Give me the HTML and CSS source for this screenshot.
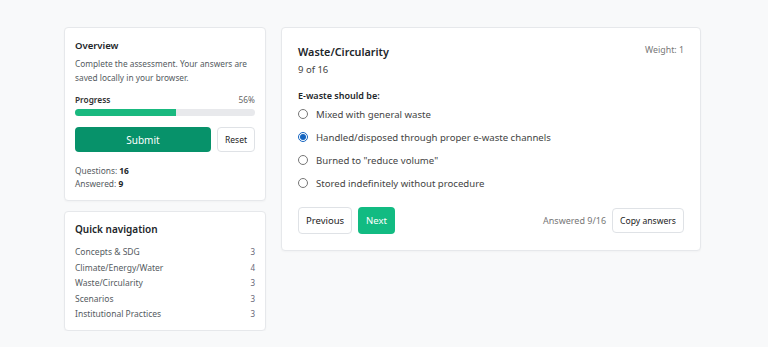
FILE: index.html
```html
<!DOCTYPE html>
<html lang="en">
<head>
    <meta charset="UTF-8">
    <meta name="viewport" content="width=device-width, initial-scale=1.0">
    <title>Assessment</title>
    <link rel="stylesheet" href="styles.css">
</head>
<body>
    <div class="layout">
        <aside class="sidebar">
            <div class="card overview">
                <h3>Overview</h3>
                <p class="muted">Complete the assessment. Your answers are saved locally in your browser.</p>
                <div class="progress-head">
                    <span class="progress-label">Progress</span>
                    <span class="progress-pct">56%</span>
                </div>
                <div class="bar"><div class="bar-fill" style="width: 56%"></div></div>
                <div class="actions">
                    <button class="btn btn-submit">Submit</button>
                    <button class="btn btn-plain btn-reset">Reset</button>
                </div>
                <div class="stats">
                    <div>Questions: <strong>16</strong></div>
                    <div>Answered: <strong>9</strong></div>
                </div>
            </div>

            <div class="card nav">
                <h3 class="nav-title">Quick navigation</h3>
                <ul class="nav-list">
                    <li><span>Concepts &amp; SDG</span><span class="count">3</span></li>
                    <li><span>Climate/Energy/Water</span><span class="count">4</span></li>
                    <li><span>Waste/Circularity</span><span class="count">3</span></li>
                    <li><span>Scenarios</span><span class="count">3</span></li>
                    <li><span>Institutional Practices</span><span class="count">3</span></li>
                </ul>
            </div>
        </aside>

        <main class="card question">
            <div class="q-head">
                <div>
                    <h2>Waste/Circularity</h2>
                    <div class="q-count">9 of 16</div>
                </div>
                <div class="weight">Weight: 1</div>
            </div>

            <div class="q-text">E-waste should be:</div>
            <div class="options">
                <label class="option"><input type="radio" name="q9"> Mixed with general waste</label>
                <label class="option"><input type="radio" name="q9" checked> Handled/disposed through proper e-waste channels</label>
                <label class="option"><input type="radio" name="q9"> Burned to "reduce volume"</label>
                <label class="option"><input type="radio" name="q9"> Stored indefinitely without procedure</label>
            </div>

            <div class="q-foot">
                <div class="q-nav">
                    <button class="btn btn-plain btn-lg">Previous</button>
                    <button class="btn btn-next btn-lg">Next</button>
                </div>
                <div class="q-meta">
                    <span class="answered">Answered 9/16</span>
                    <button class="btn btn-plain btn-copy">Copy answers</button>
                </div>
            </div>
        </main>
    </div>
</body>
</html>
```

FILE: styles.css
```css
body {
    font-family: "Noto Sans", "Open Sans", sans-serif;
    font-size: 10px;
    background: #f8f9fa;
    color: #212529;
    margin: 0;
    padding: 27px 3px 0 0;
}
.layout {
    width: 637px;
    margin: 0 auto;
    display: grid;
    grid-template-columns: 202px 1fr;
    gap: 15px;
    align-items: start;
}
.sidebar {
    display: flex;
    flex-direction: column;
    gap: 10px;
}
.card {
    background: #fff;
    border: 1px solid #e6e8eb;
    border-radius: 4px;
    box-shadow: 0 1px 2px rgba(0,0,0,0.03);
}
h3 {
    margin: 0;
    font-size: 9.5px;
    font-weight: 600;
    line-height: 14px;
}
.overview {
    padding: 11px 10px 10px;
}
.muted {
    color: #555b61;
    font-size: 8.3px;
    margin: 4px 0 0;
    line-height: 14px;
}
.progress-head {
    display: flex;
    justify-content: space-between;
    margin-top: 9px;
    font-size: 8.3px;
    line-height: 12px;
}
.progress-label { font-weight: 600; color: #333; }
.progress-pct { color: #666; }
.bar {
    height: 7px;
    background: #e8e9ec;
    border-radius: 4px;
    margin-top: 3px;
    overflow: hidden;
}
.bar-fill {
    height: 100%;
    background: #19b97f;
}
.actions {
    display: flex;
    gap: 6px;
    margin-top: 11px;
}
.btn {
    font-family: inherit;
    font-size: 9.5px;
    border-radius: 4px;
    cursor: pointer;
}
.btn-submit {
    flex: 1;
    height: 25px;
    background: #07926a;
    color: #fff;
    font-size: 10px;
    border: none;
}
.btn-plain {
    background: #fff;
    color: #222;
    border: 1px solid #dfe2e6;
    padding: 0 7px;
}
.btn-reset {
    font-size: 8.5px;
}
.stats {
    margin-top: 12px;
    color: #555b61;
    font-size: 8.4px;
    line-height: 13px;
}
.stats strong { color: #212529; font-weight: 700; }
.nav {
    padding: 10px 10px 8px;
}
.nav-title {
    font-size: 10px;
}
.nav-list {
    list-style: none;
    margin: 8px 0 0;
    padding: 0;
}
.nav-list li {
    display: flex;
    justify-content: space-between;
    align-items: center;
    color: #555b61;
    font-size: 8.5px;
    line-height: 15.5px;
}
.nav-list .count {
    font-size: 8px;
    color: #667;
}
.question {
    padding: 16px 16px 16px;
}
.q-head {
    display: flex;
    justify-content: space-between;
}
h2 {
    margin: 0;
    font-size: 10.8px;
    font-weight: 600;
    line-height: 16px;
}
.q-count {
    margin-top: 3px;
    font-size: 9.5px;
    color: #444;
}
.weight {
    font-size: 8.8px;
    color: #777;
    margin-top: 0;
}
.q-text {
    font-weight: 600;
    font-size: 9px;
    margin-top: 13px;
}
.options {
    display: flex;
    flex-direction: column;
    gap: 9px;
    margin-top: 5px;
}
.option {
    display: flex;
    align-items: center;
    color: #444;
    font-size: 9.6px;
    height: 14px;
}
.option input {
    margin: 0 8px 0 0;
    width: 10px;
    height: 10px;
    accent-color: #1464c0;
}
.q-foot {
    display: flex;
    justify-content: space-between;
    align-items: center;
    margin-top: 17px;
}
.q-nav, .q-meta {
    display: flex;
    align-items: center;
    gap: 6px;
}
.btn-lg {
    height: 27px;
    padding: 0 7px;
}
.btn-next {
    background: #12bb82;
    color: #fff;
    border: none;
    padding: 0 8px;
}
.answered {
    font-size: 9px;
    color: #777;
}
.btn-copy {
    height: 25px;
    font-size: 8.6px;
}
```
